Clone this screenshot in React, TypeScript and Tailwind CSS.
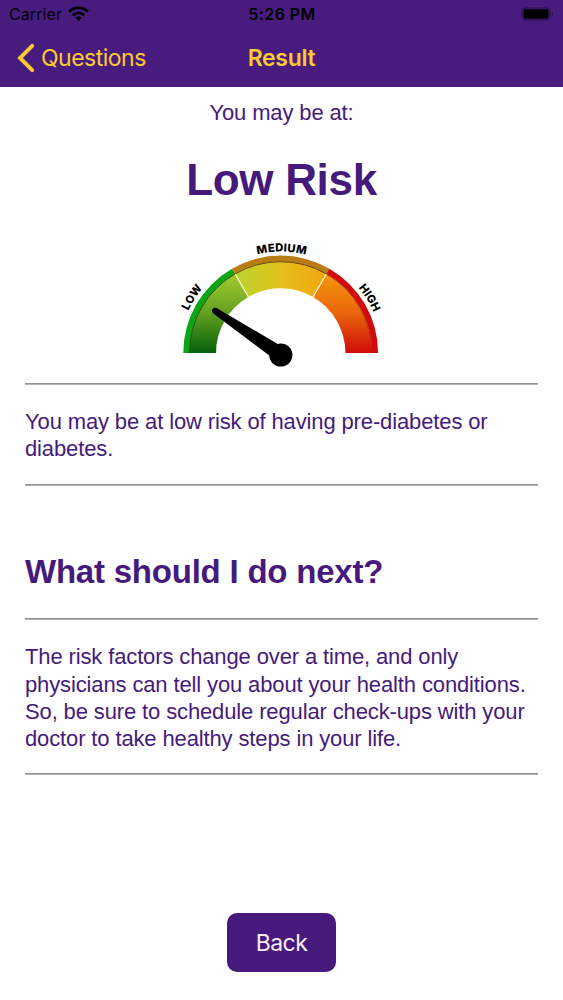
import type { ReactNode } from 'react';

const CX = 280.7;
const CY = 353;

// Point on the dial, angle in degrees measured counter-clockwise from the right
function point(r: number, deg: number) {
  const a = (deg * Math.PI) / 180;
  return `${(CX + r * Math.cos(a)).toFixed(2)} ${(CY - r * Math.sin(a)).toFixed(2)}`;
}

function arc(r: number, from: number, to: number) {
  return `M${point(r, from)}A${r} ${r} 0 0 1 ${point(r, to)}`;
}

function ring(outer: number, inner: number, from: number, to: number) {
  return `${arc(outer, from, to)}L${point(inner, to)}A${inner} ${inner} 0 0 0 ${point(inner, from)}Z`;
}

function StatusBar() {
  return (
    <div className="flex h-7 items-center justify-between pl-[9px] pr-[8px] text-black">
      <div className="flex w-[100px] items-center gap-[6px]">
        <span className="w-[53px] whitespace-nowrap text-[16px] leading-7 tracking-[0.1px]">Carrier</span>
        <svg width="21" height="16" viewBox="0 0 21 16" className="shrink-0">
          <g fill="none" stroke="#000" strokeWidth="2.9">
            <path d="M1.2 5.6C6.2.6 14.8.6 19.8 5.6" />
            <path d="M4.8 9.2C8 6.1 13 6.1 16.2 9.2" />
          </g>
          <path d="M7.3 11.6C9 10 12 10 13.7 11.6L10.5 15Z" fill="#000" />
        </svg>
      </div>
      <span className="text-[16px] font-semibold leading-7 tracking-[0.4px]">5:26 PM</span>
      <div className="flex w-[100px] justify-end">
        <svg width="34" height="14" viewBox="0 0 34 14">
          <rect x="1" y="1" width="28" height="12" rx="3.2" fill="none" stroke="#000" strokeOpacity="0.45" />
          <rect x="2.5" y="2.2" width="25" height="9.6" rx="2" fill="#000" />
          <path d="M31 5v4c1.4-.6 1.4-3.4 0-4Z" fill="#000" fillOpacity="0.5" />
        </svg>
      </div>
    </div>
  );
}

function NavBar() {
  return (
    <div className="grid h-[59px] grid-cols-[1fr_auto_1fr] items-center text-[#fccb2f]">
      <div className="flex items-center pl-[17px]">
        <svg width="18" height="30" viewBox="0 0 18 30">
          <path d="M15.2 2.8 3 15l12.2 12.2" fill="none" stroke="currentColor" strokeWidth="3.9" strokeLinecap="round" strokeLinejoin="miter" />
        </svg>
        <span className="pl-[6px] pt-px text-[23px] tracking-[-0.5px]">Questions</span>
      </div>
      <span className="pt-px text-[23px] font-semibold tracking-[-0.3px]">Result</span>
      <span />
    </div>
  );
}

function Gauge() {
  return (
    <svg width="222" height="138" viewBox="170 236 222 138" className="block">
      <defs>
        <linearGradient id="low" x1="0" y1="0" x2="0" y2="1">
          <stop offset="0" stopColor="#a6cb32" />
          <stop offset="0.5" stopColor="#62a01f" />
          <stop offset="1" stopColor="#06600b" />
        </linearGradient>
        <linearGradient id="medium" x1="0" y1="0" x2="1" y2="0">
          <stop offset="0" stopColor="#b8d52e" />
          <stop offset="0.5" stopColor="#e5c01c" />
          <stop offset="1" stopColor="#f2a50d" />
        </linearGradient>
        <linearGradient id="high" x1="0" y1="0" x2="0" y2="1">
          <stop offset="0" stopColor="#f3990d" />
          <stop offset="0.5" stopColor="#ea650b" />
          <stop offset="1" stopColor="#cf0b0b" />
        </linearGradient>
      </defs>

      <path d={ring(91.5, 64.7, 180, 120)} fill="url(#low)" />
      <path d={ring(91.5, 64.7, 120, 60)} fill="url(#medium)" />
      <path d={ring(91.5, 64.7, 60, 0)} fill="url(#high)" />

      {/* Outer rim */}
      <path d={ring(97.4, 91.5, 180, 120)} fill="#0aa515" />
      <path d={ring(97.4, 91.5, 120, 60)} fill="#b97c14" />
      <path d={ring(97.4, 91.5, 60, 0)} fill="#cf0b0b" />
      <path d={arc(91.3, 180, 120)} fill="none" stroke="#1d5208" strokeWidth="1" />
      <path d={arc(91.3, 120, 60)} fill="none" stroke="#5f4508" strokeWidth="1" />
      <path d={arc(91.3, 60, 0)} fill="none" stroke="#a8220a" strokeWidth="0.8" />

      <path d={`M${point(91, 120)}L${point(64, 120)}M${point(91, 60)}L${point(64, 60)}`} stroke="#fffbe0" strokeWidth="1.2" />

      {/* Needle */}
      <path d="M212.6 309c1-1.6 3-1.6 4.4-.8L277 343.500l-7 12.500L213 313.200c-1.300-1-1.400-3-.4-4.200Z" fill="#000" />
      <circle cx="280.8" cy="355" r="11.6" fill="#000" />

      {/* Zone labels follow the rim */}
      <path id="labelArc" d={arc(101.5, 175, 5)} fill="none" />
      <g fontFamily="Inter, sans-serif" fontWeight="800" fontSize="11.2" fill="#000" textAnchor="middle">
        <text>
          <textPath href="#labelArc" startOffset="16%" textLength="27">LOW</textPath>
        </text>
        <text>
          <textPath href="#labelArc" startOffset="50.3%" textLength="49">MEDIUM</textPath>
        </text>
        <text>
          <textPath href="#labelArc" startOffset="84.2%" textLength="29">HIGH</textPath>
        </text>
      </g>
    </svg>
  );
}

function Rule() {
  return <div className="h-[2px] w-[513px] border-t border-[#949196] bg-[#b5b2b7]" />;
}

function Body({ children }: { children: ReactNode }) {
  return <p className="whitespace-nowrap text-[22px] leading-[27.2px] tracking-[-0.13px]">{children}</p>;
}

export default function App() {
  return (
    <div className="flex h-[1000px] w-[563px] flex-col bg-[#fefefe] font-['Liberation_Sans',Arial,sans-serif] text-[#461a7c]">
      <header className="h-[87px] bg-[#481b7e] font-[Inter,sans-serif]">
        <StatusBar />
        <NavBar />
      </header>

      <main className="flex flex-1 flex-col px-[25px]">
        <p className="pt-[12px] text-center text-[22px] leading-[27px] tracking-[-0.13px]">You may be at:</p>
        <h1 className="pt-[29px] text-center text-[44px] font-bold leading-[50px] tracking-[-0.3px]">Low Risk</h1>
        <div className="pl-[145px] pt-[31px]">
          <Gauge />
        </div>

        <div className="pt-[9px]"><Rule /></div>
        <div className="pt-[23px]">
          <Body>
            You may be at low risk of having pre-diabetes or
            <br />
            diabetes.
          </Body>
        </div>
        <div className="pt-[22px]"><Rule /></div>

        <h2 className="pt-[66px] text-[33px] font-bold leading-[40px] tracking-[-0.22px]">What should I do next?</h2>
        <div className="pt-[26px]"><Rule /></div>
        <div className="pt-[23px]">
          <Body>
            The risk factors change over a time, and only
            <br />
            physicians can tell you about your health conditions.
            <br />
            So, be sure to schedule regular check-ups with your
            <br />
            doctor to take healthy steps in your life.
          </Body>
        </div>
        <div className="pt-[21px]"><Rule /></div>
      </main>

      <footer className="flex h-[87px] justify-center">
        <button className="h-[59px] w-[109px] rounded-[10px] bg-[#461a7c] pt-[2px] font-[Inter,sans-serif] text-[23px] tracking-[-0.6px] text-[#fbeefa]">
          Back
        </button>
      </footer>
    </div>
  );
}
